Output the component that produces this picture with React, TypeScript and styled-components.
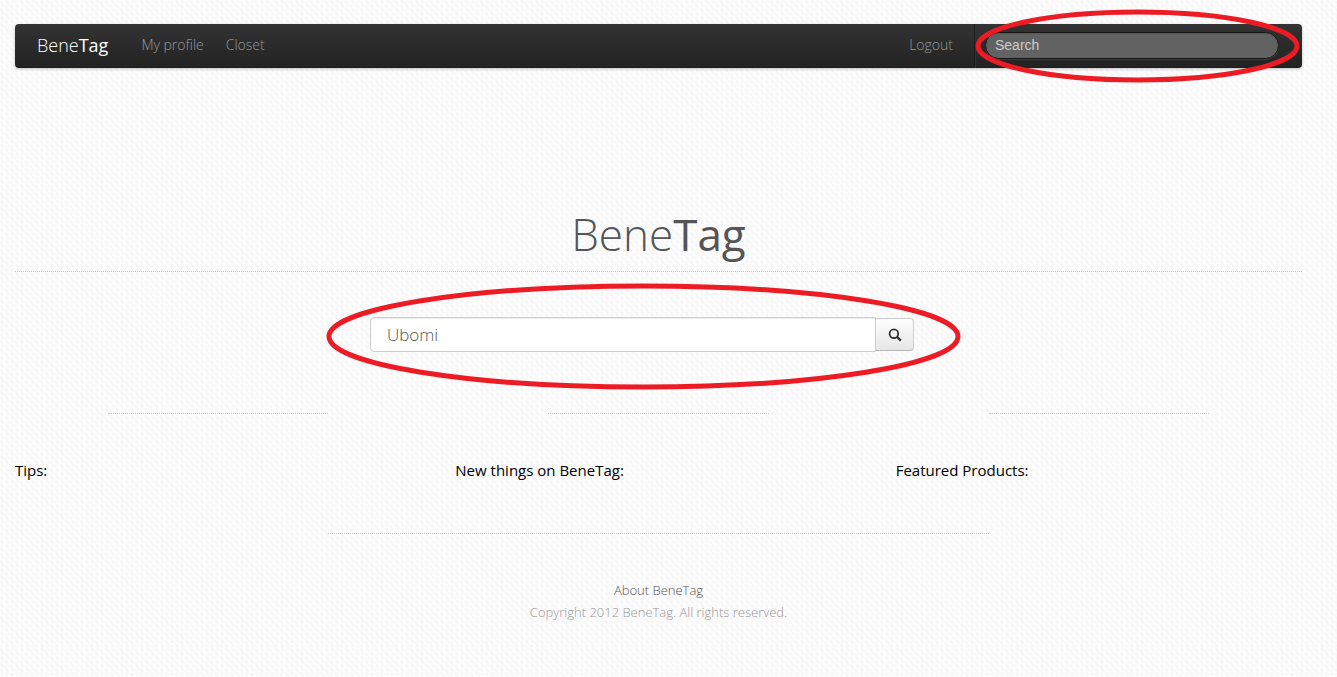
import React from "react";
import styled, { createGlobalStyle } from "styled-components";

const GlobalStyle = createGlobalStyle`
  *, *::before, *::after { box-sizing: border-box; }
  body {
    margin: 0;
    background-color: #fdfdfd;
    background-image:
      radial-gradient(circle at 2px 2px, rgba(0, 0, 0, 0.02) 1px, transparent 2px),
      repeating-linear-gradient(45deg, rgba(0, 0, 0, 0.01) 0 2px, transparent 2px 5px);
    background-size: 5px 4px, auto;
    color: #555;
    font-family: "Open Sans", "Noto Sans", sans-serif;
    font-weight: 300;
    font-size: 14px;
    line-height: 22px;
  }
`;

const Page = styled.div`
  padding: 24px 35px 24px 15px;
  overflow-x: hidden;
`;

const Navbar = styled.nav`
  display: flex;
  align-items: center;
  height: 44px;
  padding: 0 22px 2px;
  border-radius: 4px;
  background: linear-gradient(to bottom, #333, #222);
  box-shadow: 0 1px 3px rgba(0, 0, 0, 0.25), inset 0 -1px 0 rgba(0, 0, 0, 0.1);
`;

const Brand = styled.a`
  margin-right: 22px;
  color: #fff;
  font-size: 18px;
  text-decoration: none;
`;

const Tag = styled.span`
  font-weight: 400;
`;

const NavLink = styled.a<{ $end?: boolean }>`
  margin-left: ${(p) => (p.$end ? "auto" : "0")};
  padding: 0 11px;
  color: #999;
  text-decoration: none;
`;

const NavSearch = styled.form`
  position: relative;
  display: flex;
  align-items: center;
  align-self: flex-start;
  height: 44px;
  margin-left: 10px;
  padding: 0 1px 2px 10px;
  border-left: 1px solid #1c1c1c;
  box-shadow: inset 1px 0 0 #333;
`;

const NavField = styled.input`
  width: 294px;
  height: 27px;
  padding: 0 9px;
  border: 1px solid #151515;
  border-radius: 14px;
  background: #626262;
  box-shadow: inset 0 1px 2px rgba(0, 0, 0, 0.1), 0 1px 0 rgba(255, 255, 255, 0.1);
  color: #ccc;
  font: 14px/20px "Liberation Sans", Arial, sans-serif;
  outline: none;

  &::placeholder { color: #ccc; opacity: 1; }
`;

interface Outset {
  $top: number;
  $right: number;
  $bottom: number;
  $left: number;
}

const Mark = styled.svg<Outset>`
  position: absolute;
  left: ${(p) => -p.$left}px;
  top: ${(p) => -p.$top}px;
  width: calc(100% + ${(p) => p.$left + p.$right}px);
  height: calc(100% + ${(p) => p.$top + p.$bottom}px);
  overflow: visible;
  pointer-events: none;
  fill: none;
  stroke: #ed1c24;
  stroke-width: 5px;
`;

const Title = styled.h1`
  margin: 132px 0 0;
  padding-bottom: 2px;
  border-bottom: 1px dotted #ccc;
  color: #555;
  font-size: 44px;
  font-weight: 300;
  line-height: 69px;
  text-align: center;
`;

const SearchForm = styled.form`
  position: relative;
  display: flex;
  align-items: center;
  width: 544px;
  max-width: 100%;
  margin: 45px auto 0;
`;

const SearchRow = styled.div`
  padding-right: 33px;
`;

const SearchField = styled.input`
  flex: 1;
  min-width: 0;
  height: 35px;
  padding: 0 16px;
  border: 1px solid #ccc;
  border-radius: 4px 0 0 4px;
  background: #fff;
  box-shadow: inset 0 1px 1px rgba(0, 0, 0, 0.075);
  color: #555;
  font: inherit;
  font-size: 17px;
  outline: none;
`;

const SearchButton = styled.button`
  display: flex;
  align-items: center;
  justify-content: center;
  width: 39px;
  height: 33px;
  margin-left: -1px;
  padding: 0;
  border: 1px solid #ccc;
  border-bottom-color: #b3b3b3;
  border-radius: 0 4px 4px 0;
  background: linear-gradient(to bottom, #fff, #e6e6e6);
`;

const Columns = styled.div`
  display: grid;
  grid-template-columns: repeat(3, 1fr);
  margin: 61px -17px 0;
`;

const Column = styled.section`
  display: flex;
  flex-direction: column;
`;

const Rule = styled.hr`
  width: 50%;
  margin: 0 auto;
  border: 0;
  border-top: 1px dotted #ccc;
`;

const ColumnTitle = styled.h2`
  margin: 44px 17px 0;
  color: #000;
  font-size: 15px;
  font-weight: 400;
  line-height: 24px;
`;

const Footer = styled.footer`
  margin: 51px -17px 0;
  color: #999;
  font-size: 13px;
  text-align: center;
`;

const FooterLink = styled.a`
  display: inline-block;
  margin-top: 45px;
  color: #555;
  text-decoration: none;
`;

const Copyright = styled.p`
  margin: 0;
`;

const columns = ["Tips:", "New things on BeneTag:", "Featured Products:"];

function Highlight(props: Outset) {
  return (
    <Mark {...props} aria-hidden="true">
      <ellipse cx="50%" cy="50%" rx="50%" ry="50%" />
    </Mark>
  );
}

export default function App() {
  return (
    <>
      <GlobalStyle />
      <Page>
        <Navbar>
          <Brand href="#">
            Bene<Tag>Tag</Tag>
          </Brand>
          <NavLink href="#profile">My profile</NavLink>
          <NavLink href="#closet">Closet</NavLink>
          <NavLink href="#logout" $end>
            Logout
          </NavLink>
          <NavSearch>
            <NavField type="text" placeholder="Search" aria-label="Search" />
            <Highlight $top={12} $right={17} $bottom={12} $left={-3} />
          </NavSearch>
        </Navbar>
        <main>
          <Title>
            Bene<Tag>Tag</Tag>
          </Title>
          <SearchRow>
            <SearchForm>
              <SearchField type="text" defaultValue="Ubomi" aria-label="Search products" />
              <SearchButton type="button" aria-label="Search">
                <svg width="14" height="14" viewBox="0 0 14 14" fill="none" stroke="#333">
                  <circle cx="5.9" cy="5.7" r="4.3" strokeWidth="1.8" />
                  <path d="M9 8.8L12.8 12.6" strokeWidth="2.4" />
                </svg>
              </SearchButton>
              <Highlight $top={31} $right={44} $bottom={35} $left={41} />
            </SearchForm>
          </SearchRow>
          <Columns>
            {columns.map((title) => (
              <Column key={title}>
                <Rule />
                <ColumnTitle>{title}</ColumnTitle>
              </Column>
            ))}
          </Columns>
        </main>
        <Footer>
          <Rule />
          <FooterLink href="#about">About BeneTag</FooterLink>
          <Copyright>Copyright 2012 BeneTag. All rights reserved.</Copyright>
        </Footer>
      </Page>
    </>
  );
}
